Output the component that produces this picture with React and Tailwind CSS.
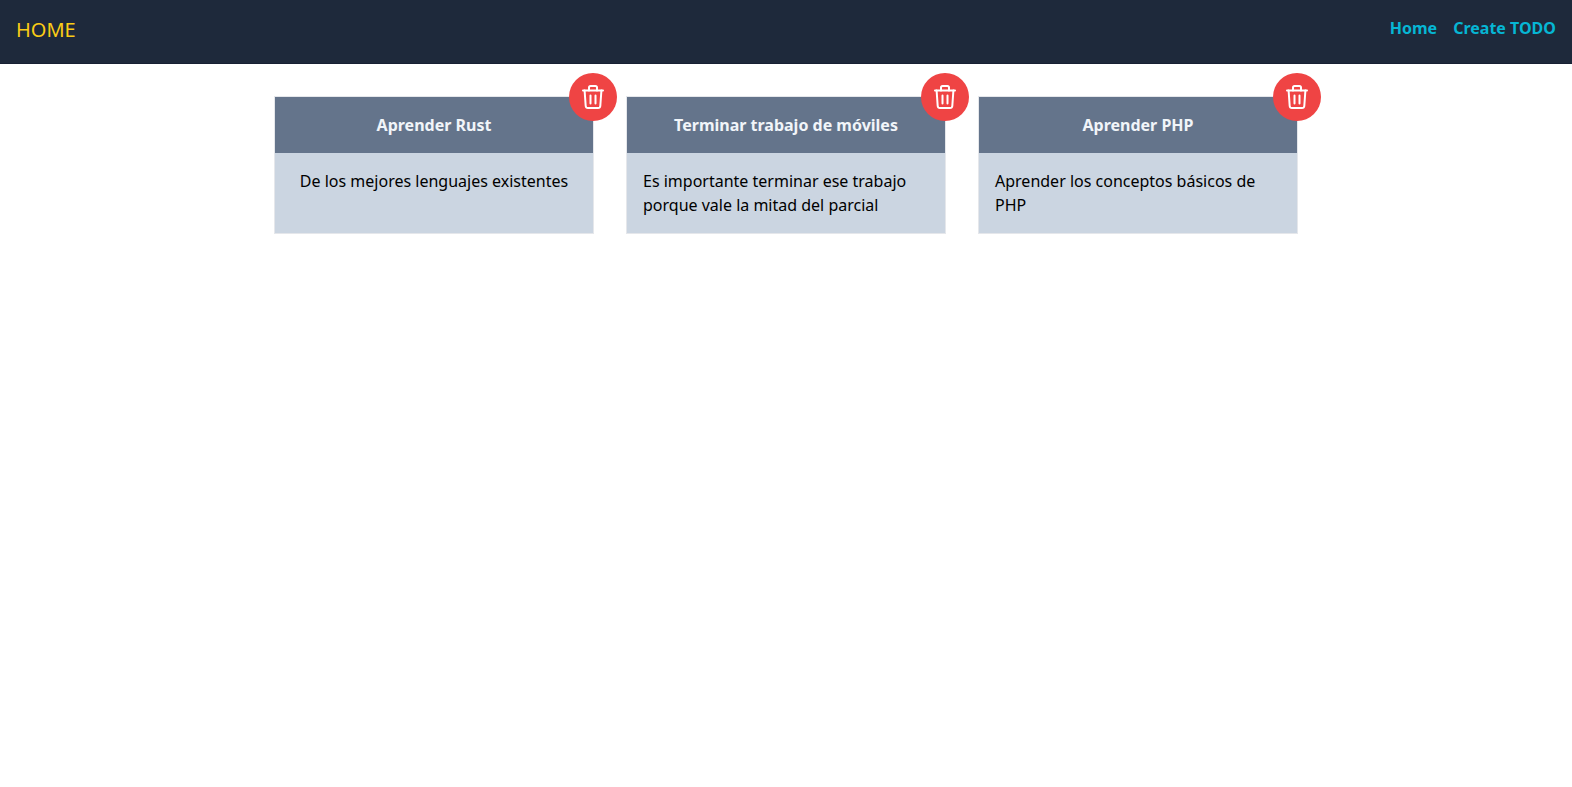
const todos = [
  { id: 1, title: "Aprender Rust", description: "De los mejores lenguajes existentes" },
  { id: 2, title: "Terminar trabajo de móviles", description: "Es importante terminar ese trabajo porque vale la mitad del parcial" },
  { id: 3, title: "Aprender PHP", description: "Aprender los conceptos básicos de PHP" },
];

function TrashIcon() {
  return (
    <svg
      aria-hidden="true"
      className="size-8"
      viewBox="0 0 32 32"
      fill="none"
      stroke="currentColor"
      strokeWidth="2"
      strokeLinecap="round"
      strokeLinejoin="round"
    >
      <path d="M6 9.5h20" />
      <path d="M7.6 9.5l1.1 15.5a2.3 2.3 0 0 0 2.3 2.1h10a2.3 2.3 0 0 0 2.3-2.1l1.1-15.5" />
      <path d="M12 9.5V6.6a1.6 1.6 0 0 1 1.6-1.6h4.8a1.6 1.6 0 0 1 1.6 1.6v2.9" />
      <path d="M13.5 14.5v8M18.5 14.5v8" />
    </svg>
  );
}

function TodoCard({ title, description }) {
  return (
    <article className="relative flex flex-col border border-[#e5e7eb]">
      <h2 className="bg-[#64748b] p-4 text-center font-bold text-[#f1f5f9]">{title}</h2>
      <div className="flex grow justify-center bg-[#cbd5e1] p-4">
        <p>{description}</p>
      </div>
      <button
        type="button"
        aria-label={`Eliminar ${title}`}
        className="absolute -top-6 -right-6 flex size-12 items-center justify-center rounded-full bg-[#ef4444] text-white"
      >
        <TrashIcon />
      </button>
    </article>
  );
}

export default function App() {
  return (
    <div className="font-['Noto_Sans',sans-serif] text-base text-black">
      <header className="flex h-16 items-start justify-between border-b border-[#172033] bg-[#1e293b] p-4">
        <h1 className="text-xl text-[#facc15]">HOME</h1>
        <nav className="flex gap-4 font-bold text-[#06b6d4]">
          <a href="#home">Home</a>
          <a href="#create">Create TODO</a>
        </nav>
      </header>
      <main className="mx-auto grid max-w-5xl grid-cols-3 gap-8 pt-8">
        {todos.map((todo) => (
          <TodoCard key={todo.id} title={todo.title} description={todo.description} />
        ))}
      </main>
    </div>
  );
}
